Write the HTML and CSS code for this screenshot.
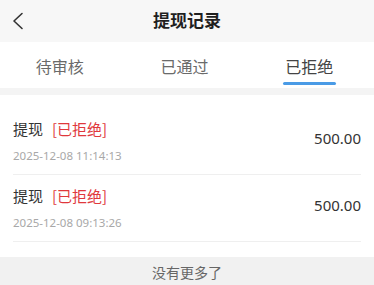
FILE: index.html
```html
<!DOCTYPE html>
<html lang="zh-CN">
<head>
<meta charset="utf-8">
<link rel="stylesheet" href="styles.css">
</head>
<body>
<div class="page">
  <header class="nav">
    <div class="nav-left">
      <svg class="back" width="14" height="18" viewBox="0 0 14 18"><path d="M11 1.5 L3 9 L11 16.5" fill="none" stroke="#333" stroke-width="1.6" stroke-linecap="round" stroke-linejoin="round"/></svg>
    </div>
    <div class="nav-title">提现记录</div>
    <div class="nav-right"></div>
  </header>
  <nav class="tabs">
    <div class="tab"><span class="tab-text">待审核</span></div>
    <div class="tab"><span class="tab-text">已通过</span></div>
    <div class="tab active"><span class="tab-text">已拒绝</span><span class="bar"></span></div>
  </nav>
  <div class="gap"></div>
  <section class="list">
    <div class="item">
      <div class="info">
        <div class="title">提现<span class="status">[已拒绝]</span></div>
        <div class="date">2025-12-08 11:14:13</div>
      </div>
      <div class="amount">500.00</div>
    </div>
    <div class="item">
      <div class="info">
        <div class="title">提现<span class="status">[已拒绝]</span></div>
        <div class="date">2025-12-08 09:13:26</div>
      </div>
      <div class="amount">500.00</div>
    </div>
  </section>
  <footer class="more">没有更多了</footer>
</div>
</body>
</html>
```
FILE: styles.css
```css
html, body {
  margin: 0;
  padding: 0;
  background: #f2f2f2;
}
body {
  font-family: "Noto Sans", "Noto Sans CJK SC", sans-serif;
  color: #333;
}
.page {
  width: 374px;
  min-height: 285px;
  display: flex;
  flex-direction: column;
}
.nav {
  height: 42px;
  box-sizing: border-box;
  padding-bottom: 3px;
  background: #f7f7f7;
  display: grid;
  grid-template-columns: 1fr auto 1fr;
  align-items: center;
}
.nav-left {
  padding-left: 11px;
  display: flex;
  align-items: center;
}
.back {
  display: block;
  margin-top: 2px;
}
.nav-title {
  font-family: "Noto Sans CJK SC", sans-serif;
  font-size: 17px;
  font-weight: 700;
  color: #1f1f1f;
  line-height: 22px;
}
.tabs {
  height: 46px;
  background: #fff;
  display: grid;
  grid-template-columns: repeat(3, 1fr);
}
.tab {
  display: flex;
  flex-direction: column;
  align-items: center;
  padding-top: 13px;
  padding-right: 5px;
}
.tab-text {
  font-family: "Noto Sans CJK SC", sans-serif;
  font-size: 16px;
  line-height: 22px;
  color: #6a6a6a;
}
.tab.active .tab-text {
  color: #444;
}
.bar {
  width: 53px;
  height: 3px;
  margin-top: 5px;
  border-radius: 2px;
  background: #4a9be6;
}
.gap {
  height: 7px;
  background: #f4f4f4;
}
.list {
  background: #fff;
  padding: 13px 13px 15px;
}
.item {
  display: flex;
  align-items: center;
  justify-content: space-between;
  padding: 11px 0 10px;
  border-bottom: 1px solid #efefef;
}
.info {
  display: flex;
  flex-direction: column;
  gap: 8px;
}
.title {
  font-family: "Noto Sans CJK SC", sans-serif;
  font-size: 15px;
  line-height: 20px;
  color: #333;
}
.status {
  color: #e0383c;
  margin-left: 9px;
}
.date {
  font-size: 11.5px;
  line-height: 17px;
  color: #a8a8a8;
}
.amount {
  font-size: 15px;
  line-height: 20px;
  color: #333;
  margin-bottom: 8px;
}
.more {
  flex: 1;
  background: #f1f1f1;
  text-align: center;
  padding-top: 5px;
  font-family: "Noto Sans CJK SC", sans-serif;
  font-size: 14px;
  line-height: 20px;
  color: #666;
}
```
